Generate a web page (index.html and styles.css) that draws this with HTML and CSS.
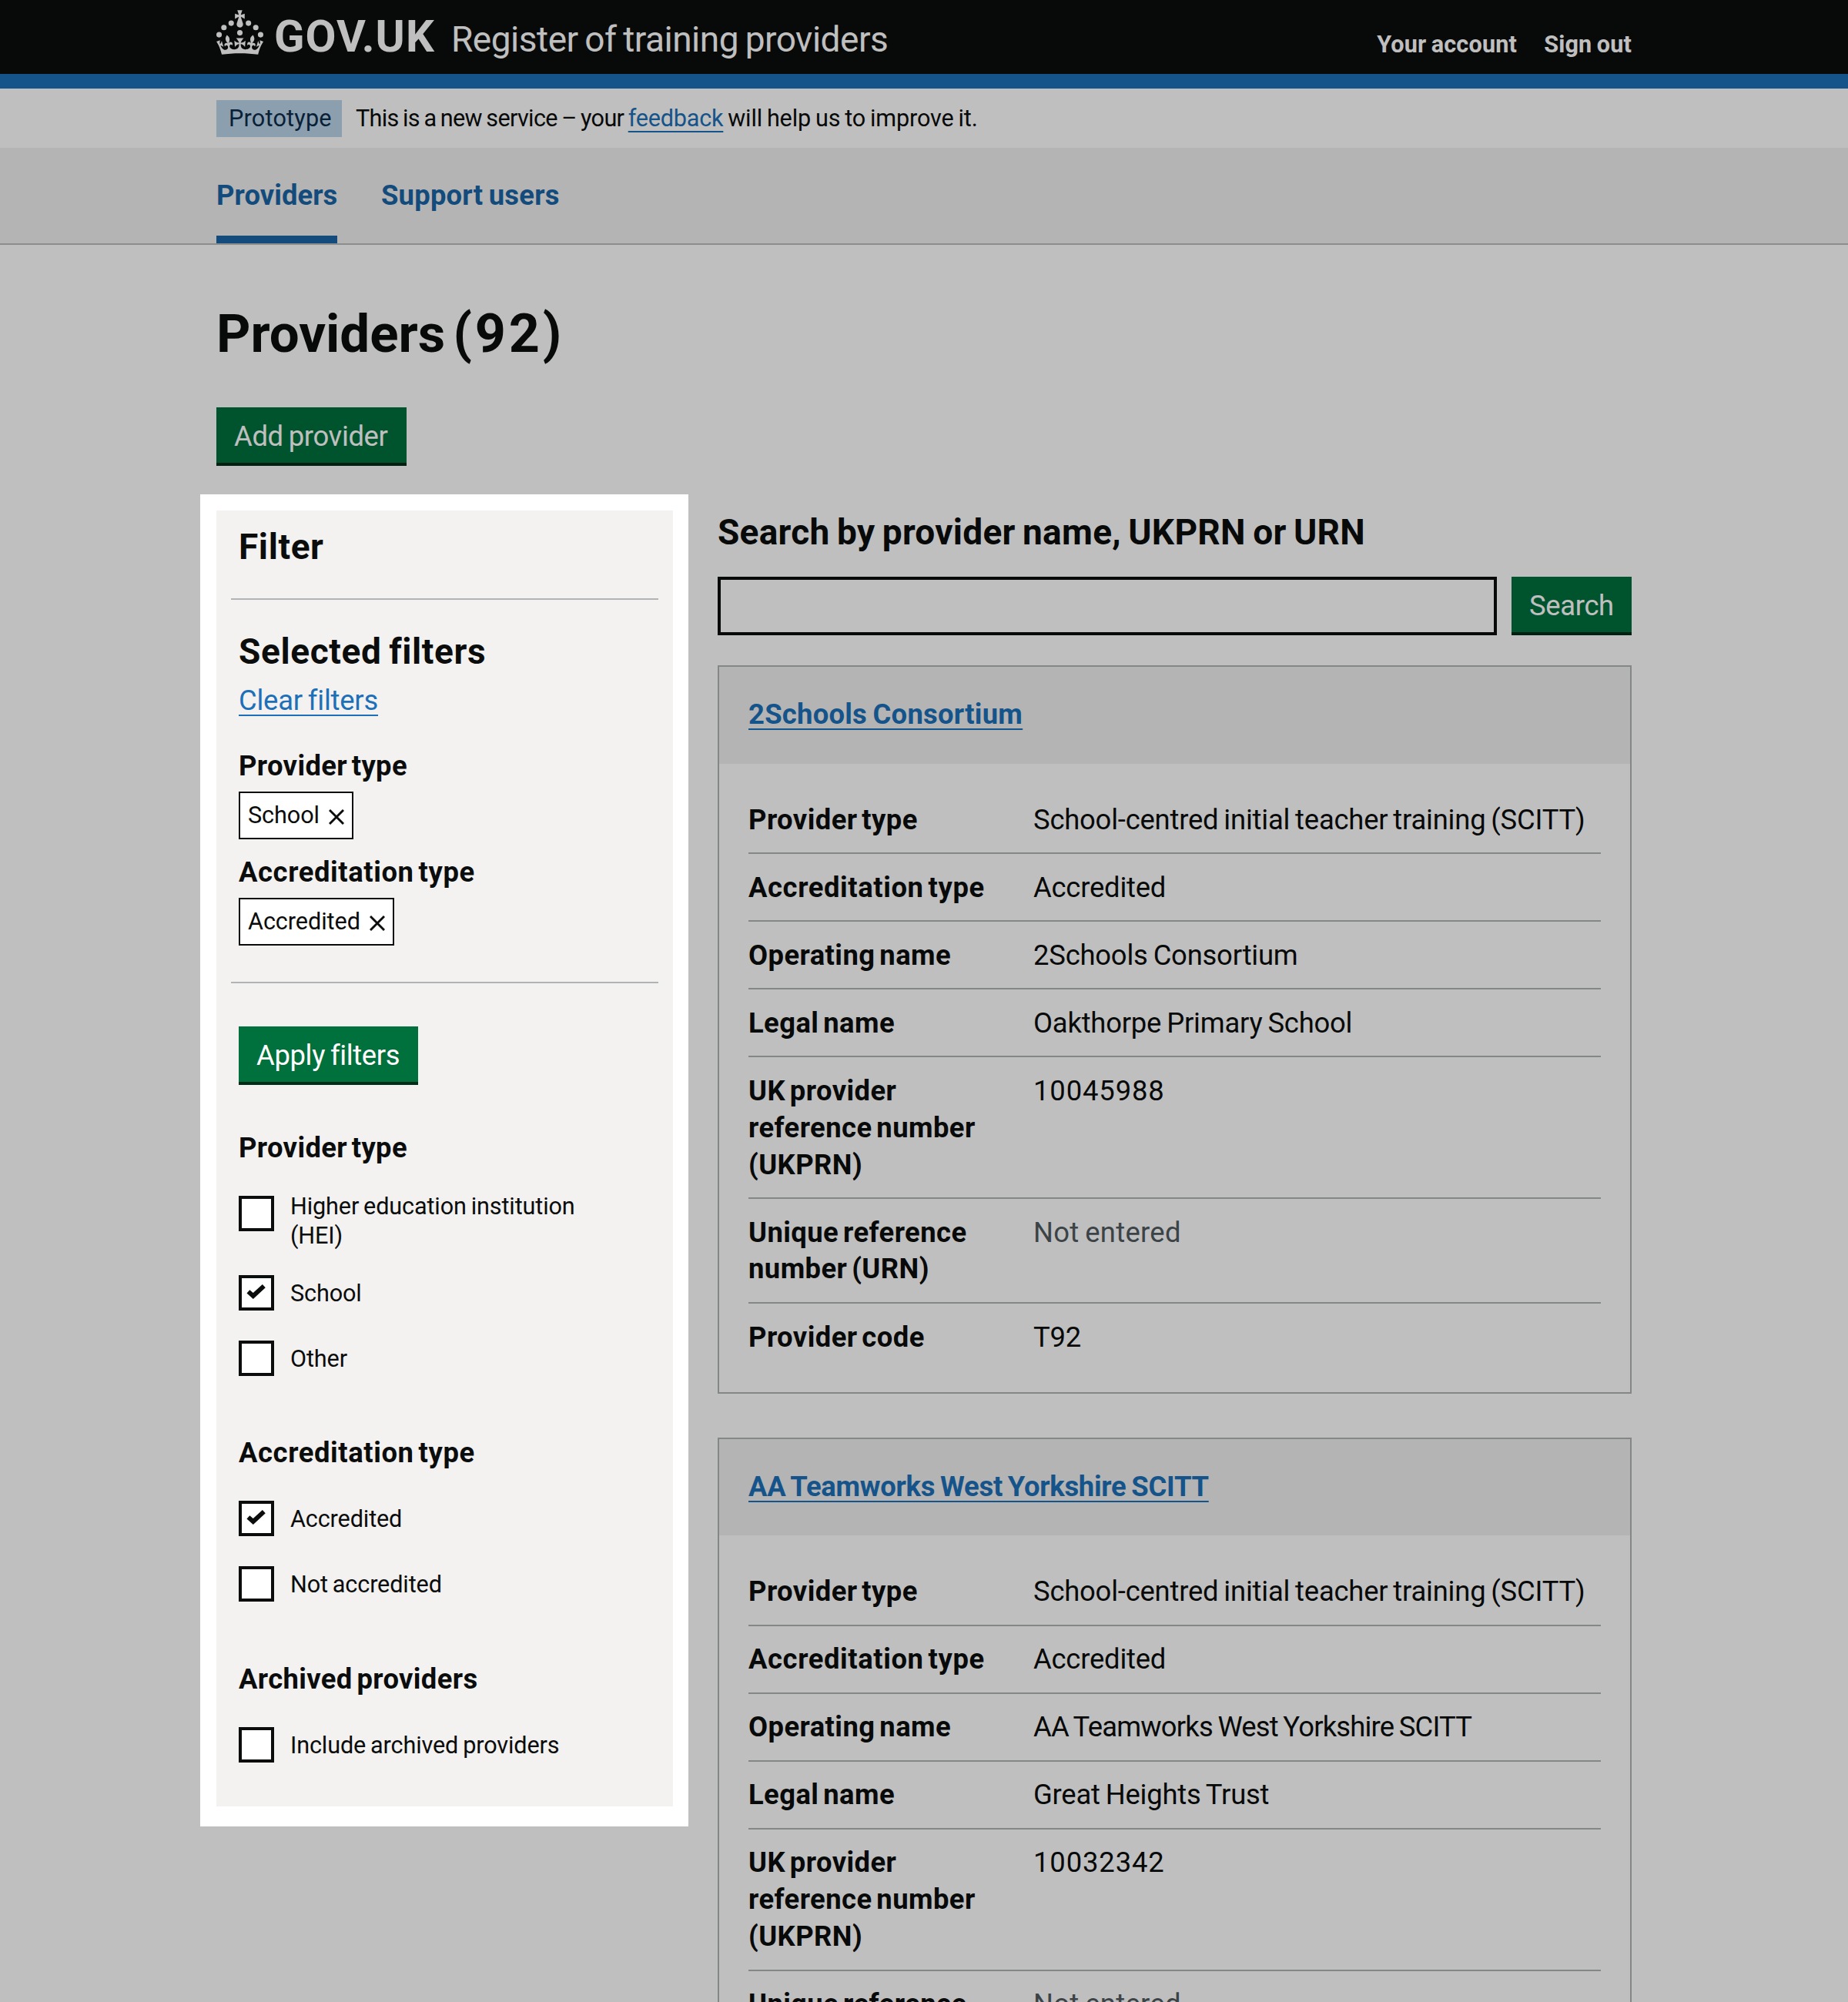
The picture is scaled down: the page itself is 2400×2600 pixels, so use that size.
FILE: index.html
```html
<!DOCTYPE html>
<html lang="en">
<head>
<meta charset="utf-8">
<title>Providers (92) - Register of training providers - GOV.UK</title>
<link rel="stylesheet" href="styles.css">
</head>
<body>
<header class="header">
  <div class="container header-inner">
    <svg class="crown" viewBox="0 0 63.4 60" aria-hidden="true">
      <circle cx="20" cy="17.6" r="3.7"/><circle cx="10.2" cy="23.5" r="3.7"/><circle cx="3.7" cy="33.2" r="3.7"/><circle cx="31.7" cy="30.6" r="3.7"/><circle cx="43.3" cy="17.6" r="3.7"/><circle cx="53.2" cy="23.5" r="3.7"/><circle cx="59.7" cy="33.2" r="3.7"/>
      <path d="M33.1,9.8c.2-.1.3-.3.5-.5l4.6,2.4v-6.8l-4.6,1.5c-.1-.2-.3-.3-.5-.5l1.9-5.9h-6.7l1.9,5.9c-.2.1-.3.3-.5.5l-4.6-1.5v6.8l4.6-2.4c.1.2.3.3.5.5l-2.6,8c-.9,2.8,1.2,5.7,4.1,5.7h0c3,0,5.1-2.9,4.1-5.7l-2.6-8ZM37,37.9s-3.4,3.8-4.1,6.1c2.2,0,4.2-.5,6.4-2.8l-.7,8.5c-2-2.8-4.4-4.1-5.7-3.8.1,3.1.5,6.7,5.8,7.2,3.7.3,6.7-1.5,7-3.8.4-2.6-2-4.3-3.7-1.6-1.4-4.5,2.4-6.1,4.9-3.2-1.9-4.5-1.8-7.7,2.4-10.9,3,4,2.6,7.3-1.2,11.1,2.4-1.3,6.2,0,4,4.6-1.2-2.8-3.7-2.2-4.2.2-.3,1.7.7,3.7,3,4.2,1.9.3,4.7-.9,7-5.9-1.3,0-2.4.7-3.9,1.7l2.4-8c.6,2.3,1.4,3.7,2.2,4.5.6-1.6.5-2.8,0-5.3l5,1.8c-2.6,3.6-5.2,8.7-7.3,17.5-7.4-1.1-15.7-1.7-24.5-1.7h0c-8.8,0-17.1.6-24.5,1.7-2.1-8.9-4.7-13.9-7.3-17.5l5-1.8c-.5,2.5-.6,3.7,0,5.3.8-.8,1.6-2.3,2.2-4.5l2.4,8c-1.5-1-2.6-1.7-3.9-1.7,2.3,5,5.2,6.2,7,5.9,2.3-.4,3.3-2.4,3-4.2-.5-2.4-3-3.1-4.2-.2-2.2-4.6,1.6-6,4-4.6-3.7-3.7-4.2-7.1-1.2-11.1,4.2,3.2,4.3,6.4,2.4,10.9,2.5-2.8,6.3-1.3,4.9,3.2-1.8-2.7-4.1-1-3.7,1.6.3,2.3,3.3,4.1,7,3.8,5.4-.5,5.7-4.2,5.8-7.2-1.3-.2-3.7,1-5.7,3.8l-.7-8.5c2.2,2.3,4.2,2.7,6.4,2.8-.7-2.3-4.1-6.1-4.1-6.1h10.6,0Z"/>
    </svg>
    <div class="header-text">
      <span class="logotype">GOV.UK</span>
      <span class="product">Register of training providers</span>
      <nav class="account">
        <a href="#">Your account</a>
        <a href="#">Sign out</a>
      </nav>
    </div>
  </div>
</header>

<div class="container phase">
  <strong class="tag">Prototype</strong>
  <span class="phase-text"><span class="phase-intro">This is a new service – your </span><a class="link" href="#">feedback</a><span class="phase-outro"> will help us to improve it.</span></span>
</div>

<nav class="service-nav">
  <div class="container service-nav-list">
    <a class="nav-item nav-item-active" href="#">Providers</a>
    <a class="nav-item" href="#">Support users</a>
  </div>
</nav>

<main class="container main">
  <h1 class="title">Providers <span class="count">(92)</span></h1>
  <a class="button button-add" href="#">Add provider</a>

  <div class="columns">
    <aside class="spotlight">
      <form class="filter">
        <h2 class="heading-m">Filter</h2>
        <section class="selected">
          <h2 class="heading-m">Selected filters</h2>
          <p class="clear"><a class="link" href="#">Clear filters</a></p>
          <h3 class="heading-s">Provider type</h3>
          <a class="chip" href="#">School <svg class="cross" viewBox="0 0 20 20"><path d="M1 1L19 19M19 1L1 19"/></svg></a>
          <h3 class="heading-s heading-wide">Accreditation type</h3>
          <a class="chip" href="#">Accredited <svg class="cross" viewBox="0 0 20 20"><path d="M1 1L19 19M19 1L1 19"/></svg></a>
        </section>
        <a class="button button-apply" href="#">Apply filters</a>

        <h3 class="heading-s group-title">Provider type</h3>
        <div class="options">
          <label class="option option-tall"><span class="box"></span><span class="option-text">Higher education institution (HEI)</span></label>
          <label class="option"><span class="box"><svg class="tick" viewBox="0 0 26 26"><path d="M2.4 11.3L8.8 17L22.8 4.2"/></svg></span><span class="option-text">School</span></label>
          <label class="option"><span class="box"></span><span class="option-text">Other</span></label>
        </div>

        <h3 class="heading-s heading-wide group-title">Accreditation type</h3>
        <div class="options">
          <label class="option"><span class="box"><svg class="tick" viewBox="0 0 26 26"><path d="M2.4 11.3L8.8 17L22.8 4.2"/></svg></span><span class="option-text">Accredited</span></label>
          <label class="option"><span class="box"></span><span class="option-text">Not accredited</span></label>
        </div>

        <h3 class="heading-s group-title">Archived providers</h3>
        <div class="options">
          <label class="option"><span class="box"></span><span class="option-text">Include archived providers</span></label>
        </div>
      </form>
    </aside>

    <div class="results">
      <h2 class="heading-m search-title">Search by provider name, UKPRN or URN</h2>
      <div class="search">
        <input class="search-input" type="text" aria-label="Search">
        <a class="button" href="#">Search</a>
      </div>

      <article class="card">
        <h2 class="card-title"><a class="link" href="#">2Schools Consortium</a></h2>
        <dl class="summary">
          <div class="row"><dt>Provider type</dt><dd>School-centred initial teacher training (SCITT)</dd></div>
          <div class="row"><dt class="heading-wide">Accreditation type</dt><dd>Accredited</dd></div>
          <div class="row"><dt>Operating name</dt><dd>2Schools Consortium</dd></div>
          <div class="row"><dt>Legal name</dt><dd>Oakthorpe Primary School</dd></div>
          <div class="row"><dt>UK provider reference number (UKPRN)</dt><dd class="numeric">10045988</dd></div>
          <div class="row"><dt>Unique reference number (URN)</dt><dd class="hint">Not entered</dd></div>
          <div class="row"><dt>Provider code</dt><dd>T92</dd></div>
        </dl>
      </article>

      <article class="card">
        <h2 class="card-title card-title-long"><a class="link" href="#">AA Teamworks West Yorkshire SCITT</a></h2>
        <dl class="summary">
          <div class="row"><dt>Provider type</dt><dd>School-centred initial teacher training (SCITT)</dd></div>
          <div class="row"><dt class="heading-wide">Accreditation type</dt><dd>Accredited</dd></div>
          <div class="row"><dt>Operating name</dt><dd class="long">AA Teamworks West Yorkshire SCITT</dd></div>
          <div class="row"><dt>Legal name</dt><dd>Great Heights Trust</dd></div>
          <div class="row"><dt>UK provider reference number (UKPRN)</dt><dd class="numeric">10032342</dd></div>
          <div class="row"><dt>Unique reference number (URN)</dt><dd class="hint">Not entered</dd></div>
        </dl>
      </article>
    </div>
  </div>
</main>
</body>
</html>
```
FILE: styles.css
```css
* { box-sizing: border-box; word-spacing: -0.05em; }

html { overflow: hidden; }

body {
  margin: 0;
  height: 2600px;
  overflow: hidden;
  background: #fff;
  color: #0b0c0c;
  font: 400 36.4px/47.87px Roboto, "Liberation Sans", sans-serif;
  letter-spacing: -0.0037em;
}

h1, h2, h3, p, dl, dd { margin: 0; }
a { color: inherit; text-decoration: none; }

.container { width: 1838px; margin: 0 auto; }

.link {
  color: #1d70b8;
  text-decoration: underline;
  text-decoration-thickness: 2px;
  text-underline-offset: 6px;
  text-decoration-skip-ink: none;
}

/* Header */
.header { height: 115px; background: #0b0c0c; border-bottom: 19px solid #1d70b8; color: #fff; }
.header-inner { display: flex; align-items: flex-start; }
.crown { width: 61px; height: 58px; margin-top: 13px; fill: #fff; flex: none; }
.header-text { display: flex; flex: 1; align-items: baseline; padding-top: 13px; margin-left: 14px; }
.logotype { font-size: 58px; font-weight: 700; line-height: 68px; width: 230px; letter-spacing: 0.018em; }
.product { font-size: 46px; letter-spacing: -0.0105em; }
.account { display: flex; gap: 35px; margin-left: auto; font-size: 30.6px; font-weight: 700; letter-spacing: 0.006em; position: relative; top: 1px; }

/* Phase banner */
.phase { display: flex; align-items: flex-start; gap: 18px; height: 77px; padding-top: 15px; font-size: 30.6px; line-height: 38.3px; }
.tag { width: 163px; height: 48px; padding: 5px 0 0 16px; background: #bbd4ea; color: #0c2d4a; font-weight: 400; letter-spacing: 0.007em; }
.phase-text { padding-top: 5px; letter-spacing: -0.007em; }
.phase-intro { letter-spacing: -0.0216em; }
.phase-outro { letter-spacing: -0.0047em; }

/* Service navigation */
.service-nav { height: 126px; background: #f1f1f1; border-bottom: 2px solid #bbbcbc; }
.service-nav-list { display: flex; gap: 57px; height: 124px; }
.nav-item { padding-top: 38px; color: #1a65a6; font-weight: 700; letter-spacing: 0.006em; }
.nav-item-active { width: 157px; border-bottom: 10px solid #1a65a6; letter-spacing: 0.002em; }

/* Page */
.main { padding-top: 77px; }
.title { font-size: 69px; line-height: 77px; letter-spacing: 0; word-spacing: -0.1em; }
.count { font-size: 70px; letter-spacing: 0.055em; }
.title + .button { margin-top: 57px; }

.button {
  display: block;
  width: max-content;
  height: 72px;
  padding: 15px 0 0 23px;
  background: #00703c;
  box-shadow: 0 4px 0 #002d18;
  color: #fff;
  line-height: 46px;
  letter-spacing: -0.009em;
  white-space: nowrap;
}
.button-add { width: 247px; }
.button-apply { width: 233px; }

.columns { display: grid; grid-template-columns: 634px 1187px; justify-content: space-between; margin: 41px 0 0 -21px; align-items: start; }

/* Filter panel, lifted out of the dimmed page */
.spotlight { position: relative; z-index: 1; padding: 21px 20px 26px 21px; background: #fff; box-shadow: 0 0 0 3000px rgba(0, 0, 0, 0.25); }
.filter { padding: 19px 19px 57px; background: #f3f2f1; }
.filter > *, .selected > * { margin-left: 10px; }
.heading-m { font-size: 46px; line-height: 57.4px; letter-spacing: 0.0135em; }
.heading-s { font-size: 36.4px; line-height: 48px; letter-spacing: 0.01em; word-spacing: -0.1em; }
.filter > .selected { margin: 38px 0 56px; padding: 39px 0 47px; border: solid #b1b4b6; border-width: 2px 0; }
.clear { margin-top: 10px; margin-bottom: 37px; line-height: 48px; letter-spacing: -0.006em; }
.chip {
  display: flex;
  align-items: center;
  justify-content: space-between;
  width: max-content;
  height: 62px;
  margin: 9px 0 19px 10px;
  padding: 1px 10px 0;
  gap: 12px;
  background: #fff;
  border: 2px solid #0b0c0c;
  font-size: 30.6px;
  letter-spacing: -0.002em;
}
.chip:last-child { margin-bottom: 0; }
.cross { width: 20px; height: 20px; margin-top: 4px; fill: none; stroke: #0b0c0c; stroke-width: 2.9; }

.group-title { margin-top: 76.5px; margin-bottom: 38px; }
.button + .group-title { margin-top: 62px; }
.options { display: grid; gap: 39px; }
.option { display: flex; gap: 21px; height: 46px; font-size: 30.6px; line-height: 38.3px; letter-spacing: -0.004em; }
.option-tall { height: 64px; }
.box { width: 46px; height: 46px; flex: none; display: flex; align-items: center; justify-content: center; background: #fff; border: 4px solid #0b0c0c; }
.tick { width: 26px; height: 26px; flex: none; fill: none; stroke: #0b0c0c; stroke-width: 5.8; }
.option-text { width: 400px; padding-top: 5px; }
.option-tall .option-text { margin-top: -10px; }

/* Results */
.search-title { margin-top: 21px; letter-spacing: 0.006em; }
.search { display: flex; gap: 19px; margin: 29px 0 39px; }
.search .button { width: 156px; }
.search-input { flex: 1; min-width: 0; height: 76px; border: 4px solid #0b0c0c; border-radius: 0; background: #fff; }
.card { margin-bottom: 57px; border: 2px solid #b1b4b6; }
.card-title { height: 125.5px; padding: 38px 38px 0; background: #f1f1f1; font-size: 36.4px; line-height: 47.87px; letter-spacing: 0.007em; }
.card-title-long { letter-spacing: -0.0076em; }
.summary { padding: 29px 38px 29px 38px; }
.row { display: grid; grid-template-columns: 332px 1fr; column-gap: 38px; padding: 19.6px 0 18.6px; border-bottom: 2px solid #b1b4b6; }
.row:last-child { border-bottom: 0; }
.row dt { font-weight: 700; letter-spacing: 0.012em; word-spacing: -0.1em; }
.row dd { white-space: nowrap; letter-spacing: -0.0057em; }
.row .heading-wide, .heading-wide { letter-spacing: 0.0165em; }
.row .long { letter-spacing: -0.022em; }
.row .numeric { letter-spacing: 0.024em; }
.row .hint { color: #505a5f; letter-spacing: 0.009em; }
```
